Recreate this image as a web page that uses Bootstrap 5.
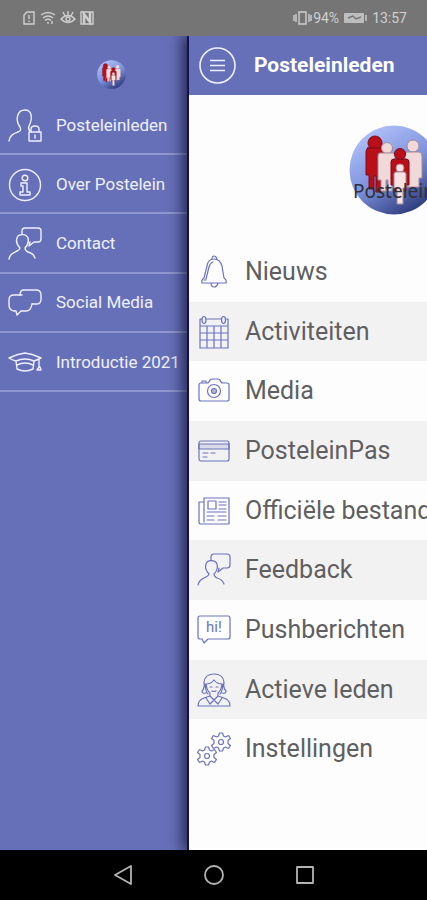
<!DOCTYPE html>
<html lang="nl">
<head>
<meta charset="utf-8">
<meta name="viewport" content="width=device-width, initial-scale=1">
<title>Posteleinleden</title>
<link href="https://cdn.jsdelivr.net/npm/bootstrap@5.3.0/dist/css/bootstrap.min.css" rel="stylesheet">
<style>
body{font-family:Roboto,"Liberation Sans",sans-serif;background:#000}
svg{display:block;flex:none}
.line-icon{width:34px;height:34px;fill:none;stroke:currentColor;stroke-width:1.4;stroke-linecap:round;stroke-linejoin:round}
.status{height:36px;background:#757575;color:#cfcfcf;font-size:14px;padding:0 20px 0 22px}
.status svg{fill:none;stroke:currentColor;stroke-width:1.4}
.drawer{width:44.25%;background:#6670b8;color:#eef0ff}
.drawer-logo{height:60px;padding:16px 0 0 34px}
.drawer-list{height:296px}
.drawer-list a{color:inherit;font-size:17px;padding:2px 8px 0;gap:14px;border-bottom:2px solid #8f97cf;white-space:nowrap}
.panel{background:#fdfdfe;box-shadow:0 0 0 2px #12124c,-4px 0 14px 2px rgba(8,8,40,.75)}
.panel-page{width:96vw}
.panel-head{height:59px;background:#6670b8;padding:0 10px;gap:18px}
.panel-head h1{font-size:21px}
.menu-btn{width:37px;height:37px;color:#eef0ff}
.brand{padding:30px 0 27px}
.menu-list{height:537px}
.menu-list a{color:#5f5f61;font-size:25px;padding:0 8px;gap:14px;white-space:nowrap}
.menu-list a:nth-child(even){background:#f2f2f3}
.menu-list .line-icon{color:#6d72be;stroke-width:1.2}
.sysnav{height:50px;gap:71px;color:#b4b4b4}
.sysnav svg{fill:none;stroke:currentColor;stroke-width:1.8;stroke-linejoin:round}
</style>
<script src="https://cdn.jsdelivr.net/npm/bootstrap@5.3.0/dist/js/bootstrap.bundle.min.js"></script>
</head>
<body class="vh-100 d-flex flex-column overflow-hidden">
<svg width="0" height="0" class="position-absolute" aria-hidden="true">
<defs>
<linearGradient id="sky" x1=".2" y1="0" x2=".8" y2="1"><stop offset="0" stop-color="#b4c4fa"/><stop offset=".5" stop-color="#7f93de"/><stop offset="1" stop-color="#23306f"/></linearGradient>
<symbol id="people" viewBox="0 0 90 90">
<circle cx="45" cy="45" r="44.500" fill="url(#sky)"/>
<g fill="#b90f18" stroke="#7c0c18"><circle cx="26" cy="18" r="7"/><path d="M18 23h14q3 0 3 4v23h-3v17h-5V51h-2v13h-5V50h-3V27q0-4 3-4z"/></g>
<g fill="#f1d8d9" stroke="#a38b9c"><circle cx="64" cy="21" r="6"/><path d="M58 27h12q3 0 3 4v22h-3v9H58v-9h-2V31q0-4 2-4z"/><circle cx="38" cy="23" r="5.500"/><path d="M31 28h13q2 0 2 3v24h-3v11h-4V55h-2v11h-5V55h-3V31q0-3 2-3z"/></g>
<g fill="#b90f18" stroke="#7c0c18"><circle cx="51" cy="29" r="5.500"/><path d="M45 34h12q3 0 3 3v23h-3v6H45v-6h-3V37q0-3 3-3z"/></g>
<g fill="#f6e3e2" stroke="#a38b9c"><circle cx="51" cy="43" r="4"/><path d="M47 47h8q2 0 2 2v14h-3v16h-6V63h-3V49q0-2 2-2z"/></g>
</symbol>
<symbol id="talker" viewBox="0 0 34 34"><path d="M1 32c1-5 4-6 8-8 2-1 3-2 3-3-3-3-4-7-3-10 1-4 9-5 11 0 1 4 0 7-3 10 0 2 1 3 3 4 4 1 6 3 7 6"/><path d="M14 7V4q0-3 3-3h13q3 0 3 3v8q0 3-3 3h-4l-5 4 1-4"/></symbol>
</defs>
</svg>

<header class="status d-flex align-items-center justify-content-between flex-shrink-0">
<div class="d-flex align-items-center gap-1">
<svg width="14" height="16" viewBox="0 0 14 16"><path d="M2 5l3-3h7v12H2zM7 5v4M7 10.500v1.500"/></svg>
<svg width="16" height="16" viewBox="0 0 16 16"><path d="M1 5q7-5 14 0M3 8q5-4 10 0M5 10.500q3-2.500 6 0M8 12v2M12 11v3"/></svg>
<svg width="16" height="16" viewBox="0 0 16 16"><path d="M1 9q7-7 14 0-7 7-14 0zM8 1v4M3 2l2 4M13 2l-2 4"/><circle cx="8" cy="9" r="2"/></svg>
<svg width="14" height="16" viewBox="0 0 14 16"><path d="M1 2h12v12H1z"/><path d="M4 14V4l6 8V2" stroke-width="2.500"/></svg>
</div>
<div class="d-flex align-items-center">
<svg width="20" height="16" viewBox="0 0 20 16"><path d="M6 2h7v12H6zM3 4v8M1 5v6M16 4v8M18 5v6"/></svg>
<span>94%</span>
<svg class="mx-1" width="25" height="14" viewBox="0 0 25 14"><rect x="1" y="2" width="20" height="10" rx="1" fill="#bdbdbd" stroke="none"/><path d="M23 4v6"/><path d="M5 7l5-2 3 3 5-2" stroke="#757575"/></svg>
<span>13:57</span>
</div>
</header>

<div class="d-flex flex-grow-1 overflow-hidden">
<nav class="drawer flex-shrink-0">
<div class="drawer-logo d-flex align-items-center justify-content-center"><svg width="29" height="29" role="img" aria-label="Postelein"><use href="#people"/></svg></div>
<div class="drawer-list d-flex flex-column">
<a href="#" class="d-flex align-items-center flex-fill text-decoration-none"><svg class="line-icon" viewBox="0 0 34 34"><path d="M1 32c1-6 4-7 9-9 3-1 3-3 2-5-5-7-3-17 5-17 7 0 8 8 4 16-1 2-1 3 1 5"/><rect x="21" y="23" width="12" height="9"/><path d="M23 23v-3q0-3 4-3t4 3v3M27 26v3"/></svg><span>Posteleinleden</span></a>
<a href="#" class="d-flex align-items-center flex-fill text-decoration-none"><svg class="line-icon" viewBox="0 0 34 34"><circle cx="17" cy="17" r="15.500"/><circle cx="17" cy="10" r="2.800"/><path d="M13 15h6v9h3v3H12v-3h3v-6h-2z"/></svg><span>Over Postelein</span></a>
<a href="#" class="d-flex align-items-center flex-fill text-decoration-none"><svg class="line-icon"><use href="#talker"/></svg><span>Contact</span></a>
<a href="#" class="d-flex align-items-center flex-fill text-decoration-none"><svg class="line-icon" viewBox="0 0 34 34"><path d="M12 9q0-5 4-5h12q5 0 5 5v4q0 5-4 5h-5"/><path d="M12 9H6q-5 0-5 5v5q0 5 5 6h2l1 4 4-4h5q5 0 6-7"/><path d="M12 9h2"/></svg><span>Social Media</span></a>
<a href="#" class="d-flex align-items-center flex-fill text-decoration-none"><svg class="line-icon" viewBox="0 0 34 34"><path d="M1 13Q9 9 17 8q8 1 16 5-4 2-7 3-9-4-18 0-4-1-7-3zM8 16l1 8q8 4 16 0l1-8M9 20q8-4 16 0M31 14v8l-2 3h4l-1-3"/></svg><span>Introductie 2021</span></a>
</div>
</nav>

<main class="panel flex-fill overflow-hidden position-relative">
<div class="panel-page">
<div class="panel-head d-flex align-items-center">
<button type="button" class="menu-btn btn p-0 border-0" aria-label="Menu"><svg width="37" height="37" viewBox="0 0 37 37" fill="none" stroke="currentColor" stroke-width="1.600"><circle cx="18.500" cy="18.500" r="17.500"/><path d="M11 13.500h15M11 18.500h15M11 23.500h15"/></svg></button>
<h1 class="text-white fw-bold m-0">Posteleinleden</h1>
</div>
<div class="brand d-flex justify-content-center"><svg class="overflow-visible" width="90" height="90" viewBox="0 0 90 90" role="img" aria-label="Postelein"><use href="#people"/><text x="4" y="73" font-family="Noto Sans, sans-serif" font-size="19" fill="#2e3038">Postelein</text></svg></div>
<nav class="menu-list d-flex flex-column">
<a href="#" class="d-flex align-items-center flex-fill text-decoration-none"><svg class="line-icon" viewBox="0 0 34 34"><path d="M5 28q-1-3 2-5l3-12q1-7 7-7t8 7l2 12q3 2 2 5zM14 28q0 4 3 4t4-4M15 4q0-3 2-3t3 3M9 24l3-12q1-4 4-5M7 25h2"/></svg><span>Nieuws</span></a>
<a href="#" class="d-flex align-items-center flex-fill text-decoration-none"><svg class="line-icon" viewBox="0 0 34 34"><path d="M5 4H3v29h28V4h-2M9 4h15M3 11h28M3 18h28M3 25h28M10 11v22M17 11v22M24 11v22"/><ellipse cx="7" cy="5" rx="2" ry="3.500"/><ellipse cx="26.500" cy="5" rx="2" ry="3.500"/></svg><span>Activiteiten</span></a>
<a href="#" class="d-flex align-items-center flex-fill text-decoration-none"><svg class="line-icon" viewBox="0 0 34 34"><path d="M4 9h6q2 0 3-3 1-1 3-1h4q2 0 3 1 1 3 3 3h4q2 0 2 2v14q0 2-2 2H4q-2 0-2-2V11q0-2 2-2zM5 9V7h4v2"/><circle cx="17" cy="17" r="6.500"/><circle cx="17" cy="17" r="2.500" fill="currentColor" fill-opacity=".5"/></svg><span>Media</span></a>
<a href="#" class="d-flex align-items-center flex-fill text-decoration-none"><svg class="line-icon" viewBox="0 0 34 34"><path d="M2 10h30v5H2z" fill="currentColor" fill-opacity=".18"/><rect x="2" y="7" width="30" height="20" rx="2"/><path d="M6 19h5M14 19h4M6 23h4"/></svg><span>PosteleinPas</span></a>
<a href="#" class="d-flex align-items-center flex-fill text-decoration-none"><svg class="line-icon" viewBox="0 0 34 34"><path d="M7 4h25v26H4q-2 0-2-2V8h5zM7 4v24M11 7h8v8h-8zM22 8h7M22 11h7M22 15h7M10 18h19M10 22h7M21 22h8M10 26h7M21 26h8"/></svg><span>Officiële bestanden</span></a>
<a href="#" class="d-flex align-items-center flex-fill text-decoration-none"><svg class="line-icon"><use href="#talker"/></svg><span>Feedback</span></a>
<a href="#" class="d-flex align-items-center flex-fill text-decoration-none"><svg class="line-icon" viewBox="0 0 34 34"><path d="M3 3h28q2 0 2 2v19q0 2-2 2H11l-4 4-2-4H3q-2 0-2-2V5q0-2 2-2z"/><text x="9" y="19" font-size="15" fill="currentColor" stroke="none">hi!</text></svg><span>Pushberichten</span></a>
<a href="#" class="d-flex align-items-center flex-fill text-decoration-none"><svg class="line-icon" viewBox="0 0 34 34"><path d="M1 33q0-6 6-8l6-2v-3q-3-2-4-9 5 0 8-4 3 4 8 4-1 7-4 9v3l6 2q6 2 6 8zM9 20q-4 1-4-2 3-3 2-9 1-8 10-8t10 8q-1 6 2 9 0 3-4 2M8 11q1 9 3 10M26 11q-1 9-3 10M13 23l4 4 4-4M9 25l4 6 4-4 4 4 4-6"/><path d="M13 14h2M19 14h2M15 18q2 1 4 0"/></svg><span>Actieve leden</span></a>
<a href="#" class="d-flex align-items-center flex-fill text-decoration-none"><svg class="line-icon" viewBox="0 0 34 34"><defs><path id="gear" d="M-1.500-9h3l1 3 2 1 3-1.500 2 3-2.500 2v3l2.500 2-2 3L4.500 5l-2 1-1 3h-3l-1-3-2-1-3 1.500-2-3L-7 1.500v-3l-2.500-2 2-3 3 1.500 2-1z"/></defs><use href="#gear" x="10" y="24"/><circle cx="10" cy="24" r="2.500"/><use href="#gear" x="24" y="10"/><circle cx="24" cy="10" r="2.500"/></svg><span>Instellingen</span></a>
</nav>
</div>
</main>
</div>

<footer class="sysnav d-flex align-items-center justify-content-center flex-shrink-0">
<button type="button" class="btn p-0 border-0 text-reset" aria-label="Terug"><svg width="20" height="20" viewBox="0 0 20 20"><path d="M18 1v18L2 10z"/></svg></button>
<button type="button" class="btn p-0 border-0 text-reset" aria-label="Start"><svg width="20" height="20" viewBox="0 0 20 20"><circle cx="10" cy="10" r="9"/></svg></button>
<button type="button" class="btn p-0 border-0 text-reset" aria-label="Recent"><svg width="20" height="20" viewBox="0 0 20 20"><path d="M2 2h16v16H2z"/></svg></button>
</footer>
</body>
</html>
